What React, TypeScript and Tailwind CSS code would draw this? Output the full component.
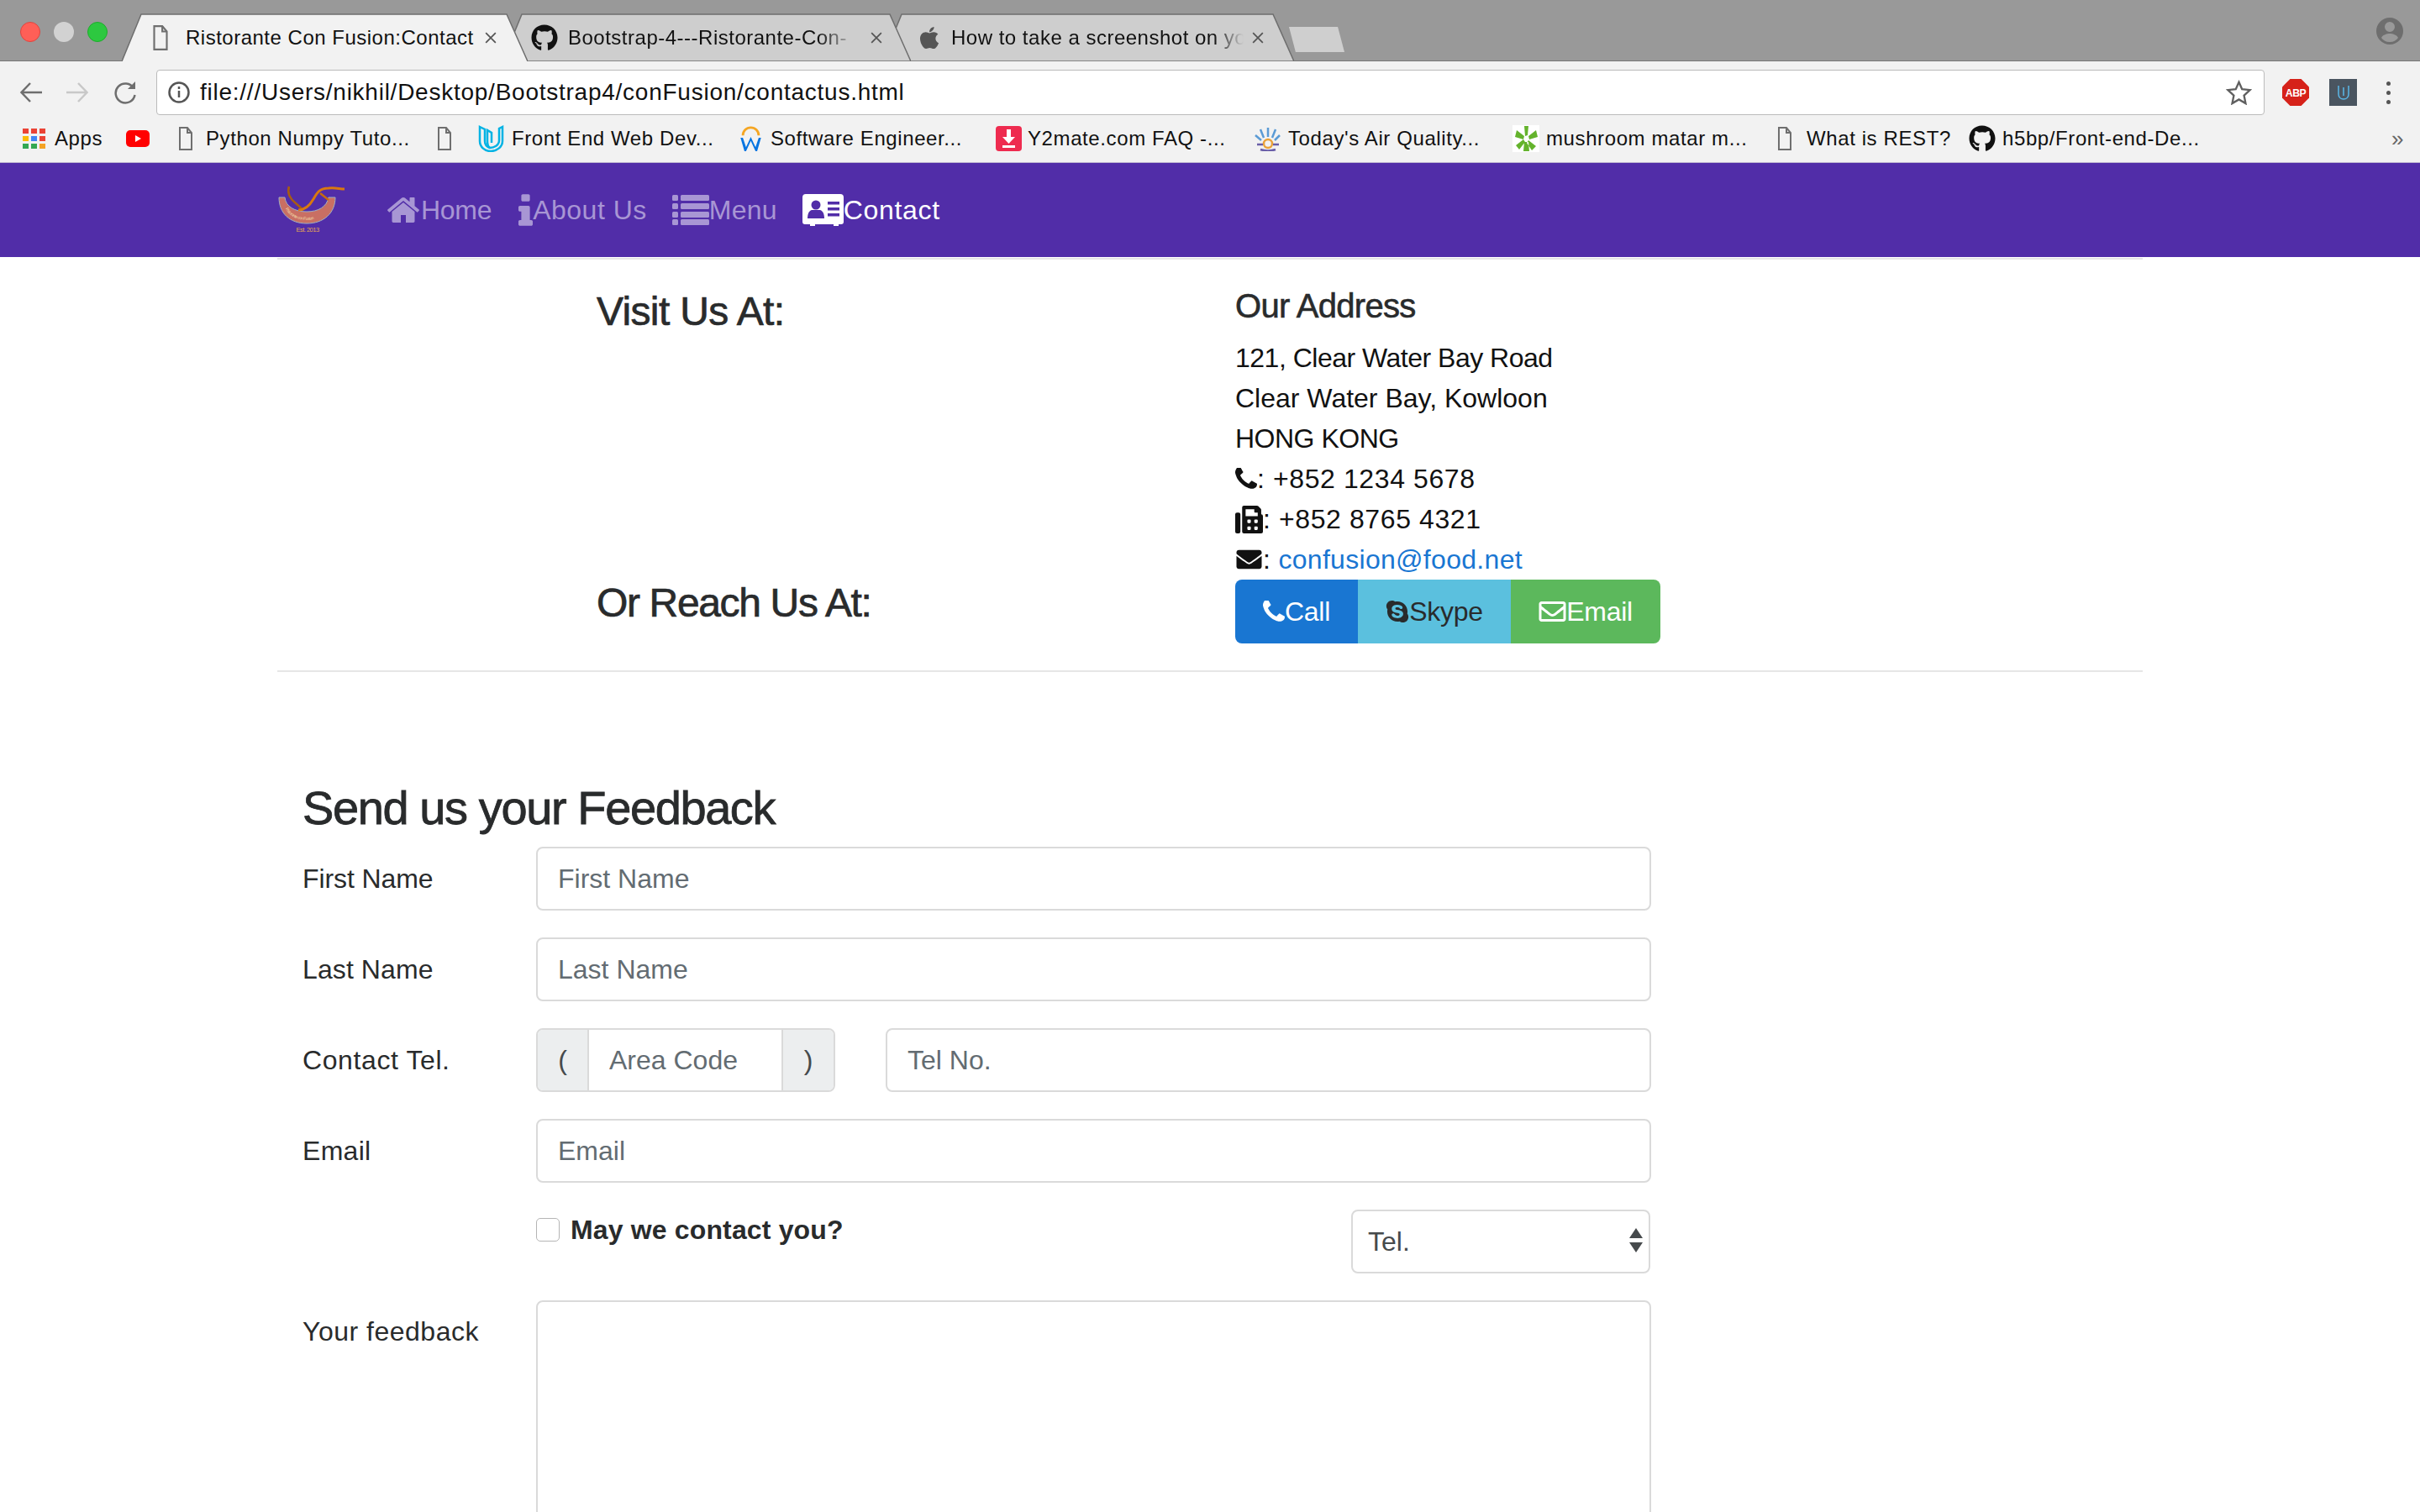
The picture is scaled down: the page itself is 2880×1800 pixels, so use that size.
import React from "react";
import { FaApple, FaEnvelope, FaFax, FaGithub, FaRegEnvelope, FaSkype } from "react-icons/fa";

const PHONE =
  "M1600 1240q0 27-10 70.5t-21 68.5q-21 50-122 106-94 51-186 51-27 0-53-3.5t-57.5-12.5-47-14.5-55.5-20.5-49-18q-98-35-175-83-127-79-264-216t-216-264q-48-77-83-175-3-9-18-49t-20.5-55.5-14.5-47-12.5-57.5-3.5-53q0-92 51-186 56-101 106-122 25-11 68.5-21t70.5-10q14 0 21 3 18 6 53 76 11 19 30 54t35 63.5 31 53.5q3 4 17.5 25t21.5 35.5 7 28.5q0 20-28.5 50t-62 55-62 53-28.5 46q0 9 5 22.5t8.5 20.5 14 24 11.5 19q76 137 174 235t235 174q2 1 19 11.5t24 14 20.5 8.5 22.5 5q18 0 46-28.5t53-62 55-62 50-28.5q14 0 28.5 7t35.5 21.5 25 17.5q25 15 53.5 31t63.5 35 54 30q70 35 76 53 3 7 3 21z";
const HOME =
  "M1472 992v480q0 26-19 45t-45 19h-384v-384h-256v384h-384q-26 0-45-19t-19-45v-480q0-1 .5-3t.5-3l575-474 575 474q1 2 1 6zm223-69l-62 74q-8 9-21 11h-3q-13 0-21-7l-692-577-692 577q-12 8-24 7-13-2-21-11l-62-74q-8-10-7-23.5t11-21.5l719-599q32-26 76-26t76 26l244 204v-195q0-14 9-23t23-9h192q14 0 23 9t9 23v408l219 182q10 8 11 21.5t-7 23.5z";
const INFO =
  "M1216 1344v128q0 26-19 45t-45 19h-512q-26 0-45-19t-19-45v-128q0-26 19-45t45-19h64v-384h-64q-26 0-45-19t-19-45v-128q0-26 19-45t45-19h384q26 0 45 19t19 45v576h64q26 0 45 19t19 45zm-128-1152v192q0 26-19 45t-45 19h-256q-26 0-45-19t-19-45v-192q0-26 19-45t45-19h256q26 0 45 19t19 45z";

const Fa4 = ({ d, className, box = "0 0 1792 1792" }: { d: string; className: string; box?: string }) => (
  <svg viewBox={box} className={className} fill="currentColor">
    <path d={d} />
  </svg>
);

const DocIcon = ({ className = "w-[16px] h-[28px]" }: { className?: string }) => (
  <svg viewBox="0 0 16 28" className={className} fill="none" stroke="#6f6f6f" strokeWidth="2">
    <path d="M1 1h9l5 6v20H1z" />
    <path d="M10 1v6h5" />
  </svg>
);

const AppsIcon = () => {
  const cols = ["#ea4335", "#ea4335", "#ea4335", "#fbbc05", "#4285f4", "#ea4335", "#34a853", "#34a853", "#f4a325"];
  return (
    <div className="grid grid-cols-3 gap-[3px] w-[27px]">
      {cols.map((c, i) => (
        <div key={i} className="h-[6px]" style={{ backgroundColor: c }}></div>
      ))}
    </div>
  );
};

const YoutubeIcon = () => (
  <svg viewBox="0 0 28 20" className="w-[28px] h-[20px]">
    <rect width="28" height="20" rx="5" fill="#f00" />
    <path d="M11 6l7 4-7 4z" fill="#fff" />
  </svg>
);

const UdacityIcon = () => (
  <svg viewBox="0 0 32 32" className="w-[32px] h-[32px]" fill="none" stroke="#02b3e4" strokeWidth="2.5">
    <path d="M3 2l6 3v14c0 5 3 7 6 8 5 0 11-3 11-9V4l4-2v17c0 7-7 12-14 12C9 31 3 26 3 19z" />
    <path d="M15 27c-3-2-3-5-3-8V6l5 3v12" />
  </svg>
);

const WorkdayIcon = () => (
  <svg viewBox="0 0 30 34" className="w-[29px] h-[32px]">
    <path d="M5 13a10 10 0 0 1 20 0" fill="none" stroke="#f5a623" strokeWidth="3" />
    <path d="M2 16l5 17h2l6-13 6 13h2l5-17h-3l-4 12-6-13-6 13-4-12z" fill="#0875e1" />
  </svg>
);

const Y2Icon = () => (
  <svg viewBox="0 0 31 30" className="w-[31px] h-[30px]">
    <rect width="31" height="30" rx="4" fill="#ee2b4f" />
    <path d="M13 4h5v9h5l-7.500 8L8 13h5z" fill="#fff" />
    <rect x="8" y="23" width="15" height="3" fill="#fff" />
  </svg>
);

const AirIcon = () => (
  <svg viewBox="0 0 33 30" className="w-[33px] h-[30px]" fill="none" strokeWidth="2.500">
    <circle cx="17" cy="21" r="5" stroke="#e9a23b" />
    <path d="M17 13V2M12 14L8 4M22 14l4-10M9 17L2 11M25 17l6-6" stroke="#5b9bd5" />
    <path d="M4 22h7M23 22h7M8 28c6 2 12 2 18 0" stroke="#6a5fa8" />
  </svg>
);

const MushroomIcon = () => (
  <svg viewBox="0 0 32 32" className="w-[32px] h-[32px]">
    <rect width="32" height="32" fill="#fff" />
    <path d="M14 1h5l-1 11-3 1zM5 6l9 7-1 4-10-3zM28 6l-9 7 1 4 10-3zM4 24l9-7 2 3-7 9zM28 25l-9-7-2 3 6 9zM14 20h5l1 11h-7z" fill="#64b32c" />
  </svg>
);

const LogoIcon = () => (
  <svg viewBox="0 0 80 57" className="w-[80px] h-[57px]">
    <path d="M1 14h7c1 11 12 17 26 17s24-6 26-17h8c0 19-14 31-34 31S1 33 1 14z" fill="#c96f63" stroke="#9fb0c4" strokeWidth="1" />
    <path id="logoArc" d="M6 20c3 14 14 21 28 21s25-7 29-21" fill="none" />
    <text fontSize="5" fill="#f1d9a8" fontFamily="Liberation Sans">
      <textPath href="#logoArc" startOffset="8">Ristorante con Fusion</textPath>
    </text>
    <path d="M13 1c-3 9 3 16 8 20l9 8" fill="none" stroke="#a85c12" strokeWidth="2.500" />
    <path d="M24 29c9 0 14-6 18-13s7-13 18-13c8-1 13 1 19 1" fill="none" stroke="#d9780f" strokeWidth="3" />
    <path d="M50 9l10 8" stroke="#c76b0e" strokeWidth="2.500" />
    <text x="35" y="55" textAnchor="middle" fontSize="7.500" fill="#e6a94f" fontFamily="Liberation Sans">Est. 2013</text>
  </svg>
);

const ListIcon = () => (
  <svg viewBox="0 0 44 36" className="w-[44px] h-[36px]" fill="currentColor">
    <rect x="0" y="0" width="7" height="7" rx="1.500" />
    <rect x="10" y="0" width="34" height="7" rx="1.500" />
    <rect x="0" y="10" width="7" height="7" rx="1.500" />
    <rect x="10" y="10" width="34" height="7" rx="1.500" />
    <rect x="0" y="20" width="7" height="7" rx="1.500" />
    <rect x="10" y="20" width="34" height="7" rx="1.500" />
    <rect x="0" y="29" width="7" height="7" rx="1.500" />
    <rect x="10" y="29" width="34" height="7" rx="1.500" />
  </svg>
);

const CardIcon = () => (
  <svg viewBox="0 0 49 38" className="w-[49px] h-[38px]">
    <path d="M4 0h41a4 4 0 0 1 4 4v29a3 3 0 0 1-3 3h-3v2h-6v-2H15v2H9v-2H3a3 3 0 0 1-3-3V4a4 4 0 0 1 4-4z" fill="#fff" />
    <circle cx="16" cy="13" r="5.500" fill="#512da8" />
    <path d="M6 29c0-7 3-10 6-10h8c3 0 6 3 6 10z" fill="#512da8" />
    <rect x="30" y="9" width="14" height="3.500" fill="#512da8" />
    <rect x="30" y="16" width="14" height="3.500" fill="#512da8" />
    <rect x="30" y="23" width="14" height="3.500" fill="#512da8" />
  </svg>
);

const Tab = ({
  w,
  active,
  children,
  className
}: {
  w: number;
  active?: boolean;
  children: React.ReactNode;
  className: string;
}) => (
  <div className={`relative h-[57px] -mb-[1px] flex items-center ${className}`}>
    <svg viewBox={`0 0 ${w} 57`} className="absolute inset-0 w-full h-full">
      <path
        d={`M0 57 L23 1 L${w - 25} 1 L${w} 57 ${active ? "" : "Z"}`}
        fill={active ? "#f2f2f2" : "#cecece"}
        stroke="#6e6e6e"
        strokeWidth="1.500"
      />
    </svg>
    <div className="relative flex items-center w-full">{children}</div>
  </div>
);

const CloseX = ({ className }: { className: string }) => (
  <svg viewBox="0 0 12 12" className={`w-[14px] h-[14px] shrink-0 ${className}`} stroke="#555" strokeWidth="1.500">
    <path d="M1 1l10 10M11 1L1 11" />
  </svg>
);

const ChromeBar = () => {
  const bookmarks = [
    { icon: <AppsIcon />, label: "Apps", slot: "w-[123px] gap-[11px]" },
    { icon: <YoutubeIcon />, label: "", slot: "w-[63px]" },
    { icon: <DocIcon />, label: "Python Numpy Tuto...", slot: "w-[308px] gap-[16px]" },
    { icon: <DocIcon />, label: "", slot: "w-[47px]" },
    { icon: <UdacityIcon />, label: "Front End Web Dev...", slot: "w-[311px] gap-[9px]" },
    { icon: <WorkdayIcon />, label: "Software Engineer...", slot: "w-[306px] gap-[9px]" },
    { icon: <Y2Icon />, label: "Y2mate.com FAQ -...", slot: "w-[307px] gap-[7px]" },
    { icon: <AirIcon />, label: "Today's Air Quality...", slot: "w-[308px] gap-[8px]" },
    { icon: <MushroomIcon />, label: "mushroom matar m...", slot: "w-[316px] gap-[8px]" },
    { icon: <DocIcon />, label: "What is REST?", slot: "w-[227px] gap-[18px]" },
    { icon: <FaGithub className="w-[32px] h-[32px] text-[#111]" />, label: "h5bp/Front-end-De...", slot: "w-[300px] gap-[8px]" }
  ];

  return (
    <div>
      {/* tab strip */}
      <div className="h-[73px] bg-[#999999] flex items-end border-b border-[#777]">
        <div className="w-[145px] h-full flex items-center pl-[24px] gap-[16px] pt-[3px] shrink-0">
          <div className="w-[24px] h-[24px] rounded-full bg-[#ff5f57] border border-[#e0443e]"></div>
          <div className="w-[24px] h-[24px] rounded-full bg-[#d2d2d2]"></div>
          <div className="w-[24px] h-[24px] rounded-full bg-[#2dc840] border border-[#1dad2b]"></div>
        </div>
        <Tab w={483} active className="w-[483px] z-30">
          <DocIcon className="ml-[36px] w-[20px] h-[30px]" />
          <span className="ml-[20px] text-[24px] tracking-[0.5px] text-[#111] whitespace-nowrap">Ristorante Con Fusion:Contact</span>
          <CloseX className="ml-[13px]" />
        </Tab>
        <Tab w={486} className="w-[486px] -ml-[30px] z-20">
          <FaGithub className="ml-[34px] w-[32px] h-[32px] text-[#111] shrink-0" />
          <span className="ml-[12px] w-[350px] text-[24px] tracking-[0.5px] text-[#111] whitespace-nowrap [mask-image:linear-gradient(to_right,black_85%,transparent_98%)]">
            Bootstrap-4---Ristorante-Con-
          </span>
          <CloseX className="ml-[10px]" />
        </Tab>
        <Tab w={490} className="w-[490px] -ml-[34px] z-10">
          <FaApple className="ml-[42px] w-[28px] h-[30px] text-[#555] shrink-0" />
          <span className="ml-[12px] w-[355px] text-[24px] tracking-[0.5px] text-[#111] whitespace-nowrap [mask-image:linear-gradient(to_right,black_88%,transparent_98%)]">
            How to take a screenshot on yo
          </span>
          <CloseX className="ml-[3px]" />
        </Tab>
        <div className="ml-[-6px] mb-[10px] w-[66px] h-[30px] bg-[#cfcfcf] [clip-path:polygon(0_0,88%_0,100%_100%,12%_100%)]"></div>
        <div className="flex-1"></div>
        <svg viewBox="0 0 32 32" className="w-[32px] h-[32px] mb-[19px] mr-[20px]" fill="#6e6e6e">
          <path d="M16 0a16 16 0 1 0 0 32 16 16 0 0 0 0-32zm0 5a6 6 0 1 1 0 12 6 6 0 0 1 0-12zm0 24a12 12 0 0 1-10-5c1-3 6-5 10-5s9 2 10 5a12 12 0 0 1-10 5z" />
        </svg>
      </div>

      {/* address bar */}
      <div className="bg-[#f2f2f2] h-[121px] pt-[10px] border-b border-[#bdb5d0]">
        <div className="flex items-center h-[54px] pl-[23px]">
          <svg viewBox="0 0 27 26" className="w-[27px] h-[26px]" fill="none" stroke="#6e6e6e" strokeWidth="2.500">
            <path d="M27 13H3M13 2L2.500 13 13 24" />
          </svg>
          <svg viewBox="0 0 27 26" className="w-[27px] h-[26px] ml-[29px]" fill="none" stroke="#c8c8c8" strokeWidth="2.500">
            <path d="M0 13h24M14 2l10.500 11L14 24" />
          </svg>
          <svg viewBox="0 0 28 28" className="w-[28px] h-[28px] ml-[29px]" fill="none" stroke="#6e6e6e" strokeWidth="2.500">
            <path d="M24 9a11.500 11.500 0 1 0 1.500 8" />
            <path d="M26 1v9h-9z" fill="#6e6e6e" stroke="none" />
          </svg>
          <div className="ml-[23px] w-[2509px] h-[54px] bg-white border border-[#bbb] rounded-[4px] flex items-center pl-[13px] pr-[14px]">
            <svg viewBox="0 0 26 26" className="w-[26px] h-[26px]" fill="none" stroke="#555" strokeWidth="2.500">
              <circle cx="13" cy="13" r="11.500" />
              <path d="M13 11v8M13 6v3" />
            </svg>
            <span className="ml-[12px] text-[28px] tracking-[0.75px] text-[#111]">file:///Users/nikhil/Desktop/Bootstrap4/conFusion/contactus.html</span>
            <svg viewBox="0 0 32 32" className="w-[31px] h-[30px] ml-auto" fill="none" stroke="#5f5f5f" strokeWidth="2.500">
              <path d="M16 3l4 9 10 1-7.500 7 2 10-8.500-5-8.500 5 2-10L2 13l10-1z" />
            </svg>
          </div>
          <svg viewBox="0 0 34 34" className="w-[34px] h-[32px] ml-[20px]">
            <path d="M10 0h14l10 10v14L24 34H10L0 24V10z" fill="#d6221a" />
            <text x="17" y="22" textAnchor="middle" fontSize="13" fontWeight="700" fill="#fff" fontFamily="Liberation Sans">ABP</text>
          </svg>
          <div className="w-[33px] h-[32px] ml-[23px] bg-[#4a5560] flex items-center justify-center">
            <svg viewBox="0 0 16 20" className="w-[16px] h-[20px]" fill="none" stroke="#5bb8e8" strokeWidth="1.500">
              <path d="M2 2v10c0 4 3 6 6 6s6-2 6-6V2M8 4v10" />
            </svg>
          </div>
          <div className="ml-[35px] flex flex-col gap-[6px]">
            <div className="w-[5px] h-[5px] rounded-full bg-[#555]"></div>
            <div className="w-[5px] h-[5px] rounded-full bg-[#555]"></div>
            <div className="w-[5px] h-[5px] rounded-full bg-[#555]"></div>
          </div>
        </div>
        <div className="flex items-center h-[40px] mt-[8px] pl-[27px] text-[24px] tracking-[0.6px] text-[#111]">
          {bookmarks.map((b, i) => (
            <div key={i} className={`flex items-center shrink-0 whitespace-nowrap ${b.slot}`}>
              {b.icon}
              {b.label && <span>{b.label}</span>}
            </div>
          ))}
          <span className="ml-[203px] text-[#666] text-[26px]">»</span>
        </div>
      </div>
    </div>
  );
};

const Navbar = () => (
  <div className="h-[112px] bg-[#512da8] flex items-center pl-[331px] text-[32px]">
    <div className="-mt-[2px]">
      <LogoIcon />
    </div>
    <a className="ml-[48px] flex items-center text-[#a896d4] tracking-[-0.3px]">
      <Fa4 d={HOME} className="w-[42px] h-[42px]" />
      Home
    </a>
    <a className="ml-[32px] flex items-center text-[#a896d4] tracking-[0.5px]">
      <Fa4 d={INFO} box="576 128 640 1408" className="w-[17px] h-[38px]" />
      About Us
    </a>
    <a className="ml-[30px] flex items-center text-[#a896d4] tracking-[0.2px]">
      <ListIcon />
      Menu
    </a>
    <a className="ml-[30px] flex items-center text-white tracking-[0.7px]">
      <CardIcon />
      Contact
    </a>
  </div>
);

const ContactInfo = () => (
  <div className="border-b-2 border-[#e6e6e6] border-t-2 mt-[1px] pt-[31px] pb-[32px] pl-[380px] grid grid-cols-[760px_1fr] grid-rows-[350px_76px]">
    <h4 className="pt-[2px] text-[48px] leading-[58px] tracking-[-0.65px] text-[#292b2c] [-webkit-text-stroke:0.7px_#292b2c]">Visit Us At:</h4>
    <div>
      <h5 className="text-[40px] leading-[48px] tracking-[-0.7px] text-[#292b2c] [-webkit-text-stroke:0.6px_#292b2c] mb-[14px]">Our Address</h5>
      <address className="not-italic text-[#111] text-[32px] leading-[48px]">
        <div>121, Clear Water Bay Road</div>
        <div className="tracking-[0px]">Clear Water Bay, Kowloon</div>
        <div>HONG KONG</div>
        <div className="flex items-center tracking-[0.6px]">
          <Fa4 d={PHONE} box="192 192 1408 1408" className="w-[26px] h-[26px]" />
          <span className="whitespace-pre">: +852 1234 5678</span>
        </div>
        <div className="flex items-center tracking-[0.6px]">
          <FaFax className="w-[33px] h-[33px]" />
          <span className="whitespace-pre">: +852 8765 4321</span>
        </div>
        <div className="flex items-center tracking-[0.3px]">
          <FaEnvelope className="w-[33px] h-[30px]" />
          <span className="whitespace-pre">: </span>
          <a className="text-[#1976d2]">confusion@food.net</a>
        </div>
      </address>
    </div>
    <h4 className="-mt-[1px] text-[48px] leading-[58px] tracking-[-1.35px] text-[#292b2c] [-webkit-text-stroke:0.7px_#292b2c]">Or Reach Us At:</h4>
    <div className="flex w-[506px] h-[76px] text-[32px] tracking-[-0.3px]">
      <div className="w-[146px] bg-[#1976d2] text-white rounded-l-[8px] flex items-center justify-center">
        <Fa4 d={PHONE} box="192 192 1408 1408" className="w-[26px] h-[26px]" />
        Call
      </div>
      <div className="w-[182px] bg-[#5bc0de] text-[#292b2c] flex items-center justify-center">
        <FaSkype className="w-[28px] h-[30px]" />
        Skype
      </div>
      <div className="w-[178px] bg-[#5cb85c] text-white rounded-r-[8px] flex items-center justify-center">
        <FaRegEnvelope className="w-[33px] h-[32px]" />
        Email
      </div>
    </div>
  </div>
);

const inputClass =
  "h-[76px] border-2 border-[#dadada] rounded-[8px] px-[24px] text-[32px] tracking-[0px] text-[#464a4c] placeholder:text-[#636c72] bg-white outline-none";

const FormRow = ({ label, track, children }: { label: string; track: string; children: React.ReactNode }) => (
  <div className="flex items-center h-[76px] mb-[32px]">
    <label className={`w-[278px] shrink-0 text-[#292b2c] text-[32px] ${track}`}>{label}</label>
    {children}
  </div>
);

const FeedbackForm = () => (
  <div className="pt-[128px] pl-[30px] w-[1635px]">
    <h3 className="text-[56px] leading-[67px] tracking-[-1.4px] text-[#292b2c] [-webkit-text-stroke:0.8px_#292b2c] mb-[13px]">Send us your Feedback</h3>
    <FormRow label="First Name" track="tracking-[-0.1px]">
      <input className={`${inputClass} w-[1327px]`} placeholder="First Name" />
    </FormRow>
    <FormRow label="Last Name" track="tracking-[0.1px]">
      <input className={`${inputClass} w-[1327px]`} placeholder="Last Name" />
    </FormRow>
    <FormRow label="Contact Tel." track="tracking-[0.6px]">
      <div className="flex w-[356px] h-[76px] border-2 border-[#dadada] rounded-[8px] overflow-hidden text-[32px] tracking-[0px]">
        <div className="w-[61px] bg-[#eceeef] border-r-2 border-[#dadada] text-[#464a4c] flex items-center justify-center">(</div>
        <input className="w-[229px] px-[24px] text-[#464a4c] placeholder:text-[#636c72] outline-none" placeholder="Area Code" />
        <div className="flex-1 bg-[#eceeef] border-l-2 border-[#dadada] text-[#464a4c] flex items-center justify-center">)</div>
      </div>
      <input className={`${inputClass} ml-[60px] w-[911px]`} placeholder="Tel No." />
    </FormRow>
    <FormRow label="Email" track="tracking-[0.3px]">
      <input className={`${inputClass} w-[1327px]`} placeholder="Email" />
    </FormRow>
    <div className="flex h-[76px] mb-[32px] pl-[278px]">
      <div className="w-[970px] flex items-start pt-[10px]">
        <div className="w-[28px] h-[28px] bg-white border border-[#b5b5b5] rounded-[5px] shrink-0"></div>
        <span className="ml-[13px] text-[32px] font-bold leading-[28px] tracking-[0.15px] text-[#292b2c]">May we contact you?</span>
      </div>
      <div className="relative w-[356px] h-[76px]">
        <select className="appearance-none w-full h-full border-2 border-[#dadada] rounded-[8px] pl-[18px] text-[32px] tracking-[0px] text-[#464a4c] bg-white outline-none">
          <option>Tel.</option>
        </select>
        <svg viewBox="0 0 16 29" className="absolute right-[9px] top-[22px] w-[16px] h-[29px]" fill="#464a4c">
          <path d="M8 0l8 12H0zM0 17h16L8 29z" />
        </svg>
      </div>
    </div>
    <div className="flex">
      <label className="w-[278px] shrink-0 pt-[13px] text-[#292b2c] text-[32px] leading-[48px] tracking-[0.5px]">Your feedback</label>
      <textarea className="w-[1327px] h-[400px] border-2 border-[#dadada] rounded-[8px] resize-none outline-none bg-white"></textarea>
    </div>
  </div>
);

export default function App() {
  return (
    <div className="h-[1800px] w-[2880px] overflow-hidden bg-white font-['Liberation_Sans',Arial,sans-serif] tracking-[-0.5px]">
      <ChromeBar />
      <Navbar />
      <div className="mx-[330px]">
        <ContactInfo />
        <FeedbackForm />
      </div>
    </div>
  );
}
